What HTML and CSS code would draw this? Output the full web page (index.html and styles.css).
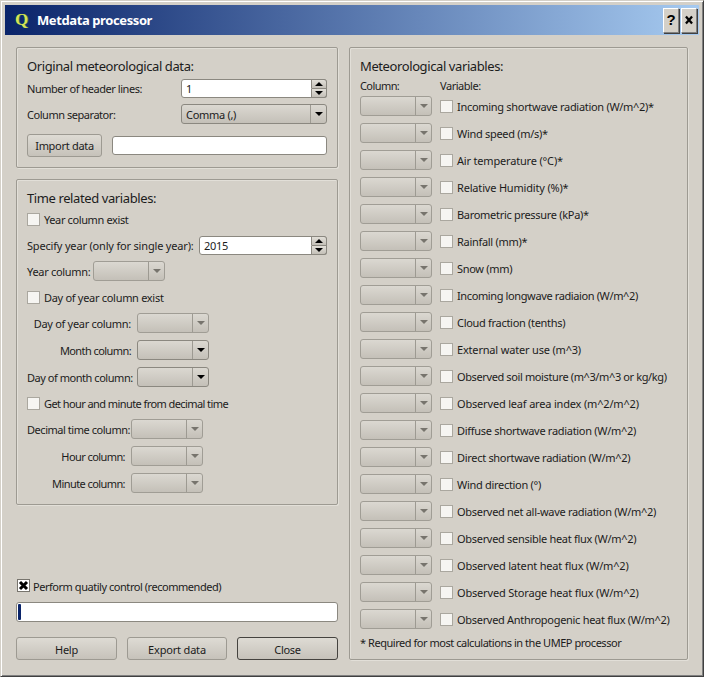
FILE: index.html
```html
<!DOCTYPE html>
<html lang="en">
<head>
<meta charset="utf-8">
<title>Metdata processor</title>
<link rel="stylesheet" href="styles.css">
</head>
<body>
<div class="window">
  <header class="titlebar">
    <span class="logo">Q</span>
    <span class="title">Metdata processor</span>
    <span class="tbtns"><button class="tbtn">?</button><button class="tbtn"><svg viewBox="0 0 16 25" width="14" height="23"><path d="M4.5 8l7 8M11.5 8l-7 8" stroke="#000" stroke-width="2.6" fill="none"/></svg></button></span>
  </header>
  <main class="main">
    <div class="left">
      <section class="group g1">
        <h2>Original meteorological data:</h2>
        <div class="row r-spin">
          <label class="lab w154 tight">Number of header lines:</label>
          <div class="spin sp146"><span class="val">1</span><span class="arrows"><span class="seg"><i class="up"></i></span><span class="seg"><i class="dn"></i></span></span></div>
        </div>
        <div class="row r-sep">
          <label class="lab w154 tight">Column separator:</label>
          <div class="combo c146"><span class="val">Comma (,)</span><span class="drop"><i class="dn"></i></span></div>
        </div>
        <div class="row r-imp">
          <button class="btn imp">Import data</button>
          <div class="field"></div>
        </div>
      </section>
      <section class="group g2">
        <h2>Time related variables:</h2>
        <div class="row h13 m7"><span class="cb"></span><span class="cbl snug">Year column exist</span></div>
        <div class="row h19 m10"><label class="lab w172 loose">Specify year (only for single year):</label><div class="spin sp128"><span class="val">2015</span><span class="arrows"><span class="seg"><i class="up"></i></span><span class="seg"><i class="dn"></i></span></span></div></div>
        <div class="row h20 m6"><label class="lab w66">Year column:</label><div class="combo off"><span class="drop"><i class="dn"></i></span></div></div>
        <div class="row h13 m10"><span class="cb"></span><span class="cbl">Day of year column exist</span></div>
        <div class="row h20 m9"><label class="lab w110 ra">Day of year column:</label><div class="combo off"><span class="drop"><i class="dn"></i></span></div></div>
        <div class="row h20 m7"><label class="lab w110 ra tighter">Month column:</label><div class="combo"><span class="drop"><i class="dn"></i></span></div></div>
        <div class="row h20 m7"><label class="lab w110 ra tight">Day of month column:</label><div class="combo"><span class="drop"><i class="dn"></i></span></div></div>
        <div class="row h13 m10"><span class="cb"></span><span class="cbl tighter">Get hour and minute from decimal time</span></div>
        <div class="row h20 m9"><label class="lab w104 ra tight">Decimal time column:</label><div class="combo off"><span class="drop"><i class="dn"></i></span></div></div>
        <div class="row h20 m7"><label class="lab w104 ra tighter">Hour column:</label><div class="combo off"><span class="drop"><i class="dn"></i></span></div></div>
        <div class="row h20 m7"><label class="lab w104 ra tighter">Minute column:</label><div class="combo off"><span class="drop"><i class="dn"></i></span></div></div>
      </section>
      <div class="bottom">
        <div class="row h13 qc"><span class="cb on"><svg viewBox="0 0 13 13" width="13" height="13"><path d="M3 3l7 7M10 3l-7 7" stroke="#000" stroke-width="3" fill="none"/></svg></span><span class="cbl nar tight">Perform quatily control (recommended)</span></div>
        <div class="progress"><span class="chunk"></span></div>
        <div class="buttons">
          <button class="btn b1">Help</button>
          <button class="btn b2 loose">Export data</button>
          <button class="btn b3 def">Close</button>
        </div>
      </div>
    </div>
    <section class="group right">
      <h2>Meteorological variables:</h2>
      <div class="heads"><span class="hc tighter">Column:</span><span class="tight">Variable:</span></div>
      <div class="vars">
        <div class="vrow"><div class="combo off"><span class="drop"><i class="dn"></i></span></div><span class="cb"></span><span class="cbl">Incoming shortwave radiation (W/m^2)*</span></div>
        <div class="vrow"><div class="combo off"><span class="drop"><i class="dn"></i></span></div><span class="cb"></span><span class="cbl">Wind speed (m/s)*</span></div>
        <div class="vrow"><div class="combo off"><span class="drop"><i class="dn"></i></span></div><span class="cb"></span><span class="cbl loose">Air temperature (°C)*</span></div>
        <div class="vrow"><div class="combo off"><span class="drop"><i class="dn"></i></span></div><span class="cb"></span><span class="cbl loose">Relative Humidity (%)*</span></div>
        <div class="vrow"><div class="combo off"><span class="drop"><i class="dn"></i></span></div><span class="cb"></span><span class="cbl">Barometric pressure (kPa)*</span></div>
        <div class="vrow"><div class="combo off"><span class="drop"><i class="dn"></i></span></div><span class="cb"></span><span class="cbl">Rainfall (mm)*</span></div>
        <div class="vrow"><div class="combo off"><span class="drop"><i class="dn"></i></span></div><span class="cb"></span><span class="cbl">Snow (mm)</span></div>
        <div class="vrow"><div class="combo off"><span class="drop"><i class="dn"></i></span></div><span class="cb"></span><span class="cbl snug">Incoming longwave radiaion (W/m^2)</span></div>
        <div class="vrow"><div class="combo off"><span class="drop"><i class="dn"></i></span></div><span class="cb"></span><span class="cbl">Cloud fraction (tenths)</span></div>
        <div class="vrow"><div class="combo off"><span class="drop"><i class="dn"></i></span></div><span class="cb"></span><span class="cbl loose">External water use (m^3)</span></div>
        <div class="vrow"><div class="combo off"><span class="drop"><i class="dn"></i></span></div><span class="cb"></span><span class="cbl snug">Observed soil moisture (m^3/m^3 or kg/kg)</span></div>
        <div class="vrow"><div class="combo off"><span class="drop"><i class="dn"></i></span></div><span class="cb"></span><span class="cbl loose">Observed leaf area index (m^2/m^2)</span></div>
        <div class="vrow"><div class="combo off"><span class="drop"><i class="dn"></i></span></div><span class="cb"></span><span class="cbl">Diffuse shortwave radiation (W/m^2)</span></div>
        <div class="vrow"><div class="combo off"><span class="drop"><i class="dn"></i></span></div><span class="cb"></span><span class="cbl">Direct shortwave radiation (W/m^2)</span></div>
        <div class="vrow"><div class="combo off"><span class="drop"><i class="dn"></i></span></div><span class="cb"></span><span class="cbl">Wind direction (°)</span></div>
        <div class="vrow"><div class="combo off"><span class="drop"><i class="dn"></i></span></div><span class="cb"></span><span class="cbl">Observed net all-wave radiation (W/m^2)</span></div>
        <div class="vrow"><div class="combo off"><span class="drop"><i class="dn"></i></span></div><span class="cb"></span><span class="cbl">Observed sensible heat flux (W/m^2)</span></div>
        <div class="vrow"><div class="combo off"><span class="drop"><i class="dn"></i></span></div><span class="cb"></span><span class="cbl loose">Observed latent heat flux (W/m^2)</span></div>
        <div class="vrow"><div class="combo off"><span class="drop"><i class="dn"></i></span></div><span class="cb"></span><span class="cbl loose">Observed Storage heat flux (W/m^2)</span></div>
        <div class="vrow"><div class="combo off"><span class="drop"><i class="dn"></i></span></div><span class="cb"></span><span class="cbl">Observed Anthropogenic heat flux (W/m^2)</span></div>
      </div>
      <p class="note tight">* Required for most calculations in the UMEP processor</p>
    </section>
  </main>
</div>
</body>
</html>
```
FILE: styles.css
```css
* { box-sizing: border-box; }
html, body { margin: 0; padding: 0; height: 677px; overflow: hidden; background: #d4d0c8; }
body { font: 11px/13px "Noto Sans", sans-serif; letter-spacing: -0.3px; color: #1c1c1c; }
.loose { letter-spacing: -0.18px; }
.snug { letter-spacing: -0.38px; }
.tight { letter-spacing: -0.46px; }
.tighter { letter-spacing: -0.58px; }
.window {
  width: 704px; height: 677px; display: flex; flex-direction: column;
  padding: 5px 5px 2px 5px;
  border: 1px solid #d4d0c8; border-right-color: #404040; border-bottom-color: #404040;
  box-shadow: inset 1px 1px 0 #fff, inset -1px -1px 0 #808080;
}
.titlebar {
  height: 30px; flex: none; display: flex; align-items: center; margin: -1px -1px 0 -1px;
  background: linear-gradient(90deg, #0a246a 0%, #a6caf0 100%);
  padding: 0 2px 0 10px; color: #fff;
}
.logo { font: bold 17px/20px "Liberation Serif", serif; letter-spacing: 0; color: #d6e25a; text-shadow: 1px 0 0 #2f7a35; width: 22px; }
.title { font: bold 13px/16px "Noto Sans", sans-serif; letter-spacing: -0.4px; flex: 1; }
.tbtns { display: flex; gap: 2px; }
.tbtn {
  width: 16px; height: 25px; padding: 0; font: bold 15px/20px "Liberation Sans", sans-serif; color: #000;
  background: #d4d0c8; border: 1px solid #808080; border-top-color: #fff; border-left-color: #fff;
  box-shadow: 1px 1px 0 #404040; display: flex; align-items: center; justify-content: center;
}
.tbtn svg { display: block; }
.main { flex: 1; display: flex; gap: 11px; padding: 12px 10px 14px 10px; }
.left { width: 322px; display: flex; flex-direction: column; }
.group {
  border: 1px solid #9d9a92; border-radius: 2px; background: #d4d0c8;
  box-shadow: inset 1px 1px 0 #e2dfd8, 1px 1px 0 #e2dfd8;
}
h2 { margin: 0; font: 400 13px/16px "Noto Sans", sans-serif; letter-spacing: -0.4px; color: #1c1c1c; }
.row { display: flex; align-items: center; margin-left: 10px; }
.g1 { height: 121px; padding: 10px 0 0 0; }
.g1 h2, .g2 h2 { margin-left: 10px; }
.r-spin { height: 19px; margin-top: 5px; }
.r-sep { height: 20px; margin-top: 6px; }
.r-imp { height: 23px; margin-top: 10px; }
.g2 { height: 326px; margin-top: 11px; padding: 10px 0 0 0; }
.h13 { height: 13px; } .h19 { height: 19px; } .h20 { height: 20px; }
.m6 { margin-top: 6px; } .m7 { margin-top: 7px; } .m9 { margin-top: 9px; } .m10 { margin-top: 10px; }
.lab { flex: none; white-space: nowrap; }
.w154 { width: 154px; } .w172 { width: 172px; } .w66 { width: 66px; } .w110 { width: 110px; } .w104 { width: 104px; }
.ra { text-align: right; padding-right: 6px; }
.spin, .combo, .field, .progress { border: 1px solid #8b8880; border-radius: 3px; flex: none; }
.spin { height: 19px; background: #fff; display: flex; align-items: center; }
.sp146 { width: 146px; } .sp128 { width: 128px; }
.val { flex: 1; padding-left: 4px; }
.arrows { width: 16px; height: 19px; margin: -1px -1px -1px 0; flex: none; display: flex; flex-direction: column; }
.seg { flex: 1; display: flex; align-items: center; justify-content: center; background: linear-gradient(#e2dfd8, #c4c0b8); border: 1px solid #8b8880; }
.seg:first-child { border-radius: 0 3px 0 0; }
.seg:last-child { border-radius: 0 0 3px 0; border-top: 0; }
.up { width: 0; height: 0; border: 4px solid transparent; border-top: 0; border-bottom: 4px solid #000; }
.dn { width: 0; height: 0; border: 4px solid transparent; border-bottom: 0; border-top: 4px solid #000; }
.combo { width: 72px; height: 20px; display: flex; align-items: center; background: linear-gradient(#dbd8d1, #c4c0b8); }
.c146 { width: 146px; }
.combo .val { padding-left: 4px; }
.drop { margin-left: auto; width: 16px; height: 100%; flex: none; border-left: 1px solid #9d9a92; display: flex; align-items: center; justify-content: center; }
.off .dn { border-top-color: #77746d; }
.off { border-color: #a09d95; }
.field { flex: none; width: 215px; height: 19px; background: #fff; margin-left: 10px; }
.btn {
  font: 11px/13px "Noto Sans", sans-serif; letter-spacing: -0.3px; color: #1c1c1c; padding: 0; border: 1px solid #9d9a92; border-radius: 3px;
  background: linear-gradient(#dedbd4, #c6c2ba);
}
.btn.loose { letter-spacing: -0.18px; }
.imp { width: 75px; height: 23px; }
.cb { width: 13px; height: 13px; flex: none; background: #f6f5f2; border: 1px solid #aaa79f; display: block; }
.cb.on { background: #fff; border-color: #77746d; }
.cb.on svg { display: block; margin: -1px; }
.cbl { margin-left: 4px; white-space: nowrap; }
.bottom { margin-top: auto; }
.qc { margin-left: 1px; }
.nar { margin-left: 3px; padding-top: 2px; }
.progress { height: 20px; background: #fff; margin-top: 10px; padding: 1px; }
.chunk { display: block; width: 3px; height: 16px; background: #0a246a; border-radius: 1px; }
.buttons { display: flex; justify-content: space-between; margin-top: 15px; }
.buttons .btn { height: 23px; padding-top: 1px; }
.b1 { width: 101px; } .b2 { width: 100px; } .b3 { width: 101px; }
.def { border-color: #45433f; }
.right { width: 339px; padding: 10px 0 0 10px; }
.heads { display: flex; height: 13px; margin-top: 5px; }
.hc { width: 80px; }
.vars { margin-top: 4px; }
.vrow { height: 20px; margin-bottom: 7px; display: flex; align-items: center; }
.vrow .combo { margin-right: 8px; }
.note { margin: 2px 0 0; }
```
